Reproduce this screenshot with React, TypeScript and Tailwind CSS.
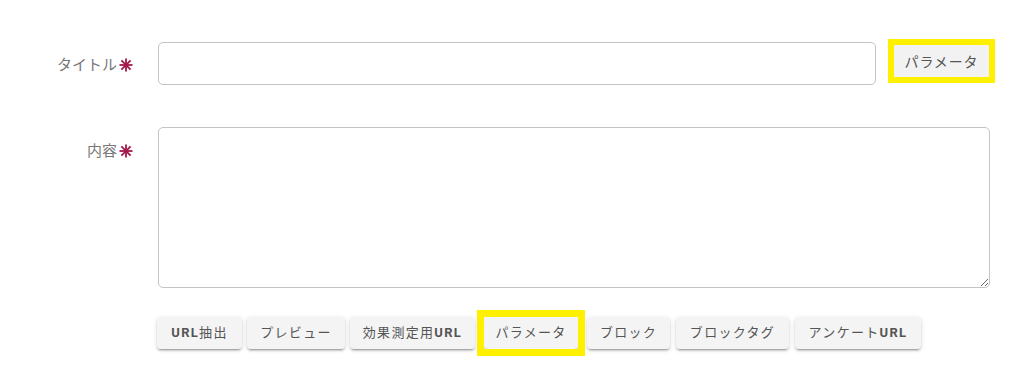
import React from "react";

const jp = { fontFamily: '"Noto Sans CJK JP", "Noto Sans", sans-serif' };
const btnFont = { fontFamily: 'Roboto, "Noto Sans CJK JP", sans-serif' };

function Star() {
  return (
    <svg width="14" height="14" viewBox="0 0 14 14" className="ml-[2px] mt-[2px]">
      <g stroke="#a3174b" strokeWidth="1.8" strokeLinecap="butt">
        <line x1="7" y1="0.5" x2="7" y2="13.5" />
        <line x1="0.5" y1="7" x2="13.5" y2="7" />
        <line x1="2.4" y1="2.4" x2="11.6" y2="11.6" />
        <line x1="11.6" y1="2.4" x2="2.4" y2="11.6" />
      </g>
    </svg>
  );
}

function Label({ text }: { text: string }) {
  return (
    <div className="w-[134px] shrink-0 flex justify-end items-center pr-[1px] text-[15px] text-[#777]" style={jp}>
      <span>{text}</span>
      <Star />
    </div>
  );
}

function MuiBtn({ children, w }: { children: React.ReactNode; w: number }) {
  return (
    <button
      className="h-[32px] flex items-center justify-center rounded-[4px] bg-[#f4f4f4] text-[#555] text-[13px] font-normal tracking-[0.1em] shadow-[0_3px_1px_-2px_rgba(0,0,0,0.2),0_2px_2px_0_rgba(0,0,0,0.14),0_1px_5px_0_rgba(0,0,0,0.12)] whitespace-nowrap"
      style={{ ...btnFont, width: w }}
    >
      {children}
    </button>
  );
}

const U = () => <span className="font-bold">URL</span>;

export default function App() {
  return (
    <div className="w-[1024px] h-[365px] bg-white overflow-hidden pt-[39px]">
      {/* Title row */}
      <div className="flex items-start">
        <div className="mt-[3px] h-[44px] flex">
          <Label text="タイトル" />
        </div>
        <div className="ml-[24px] mt-[3px] w-[718px] h-[43px] border border-[#c4c4c4] rounded-[5px]" />
        <div className="ml-[12px] border-[6px] border-[#fff000]">
          <div className="w-[95px] h-[32px] bg-[#f2f2f2] flex items-center justify-center text-[14px] text-[#555] tracking-[0.06em]" style={jp}>
            パラメータ
          </div>
        </div>
      </div>

      {/* Content row */}
      <div className="flex items-start mt-[41px]">
        <div className="h-[46px] flex">
          <Label text="内容" />
        </div>
        <textarea className="ml-[24px] w-[832px] h-[161px] border border-[#c4c4c4] rounded-[5px] outline-none resize-y" />
      </div>

      {/* Buttons row */}
      <div className="flex items-center mt-[29px] ml-[157px]">
        <div className="flex gap-[5px]">
          <MuiBtn w={85}><U />抽出</MuiBtn>
          <MuiBtn w={98}>プレビュー</MuiBtn>
          <MuiBtn w={125}>効果測定用<U /></MuiBtn>
        </div>
        <div className="relative ml-[9px] mr-[9px]">
          <MuiBtn w={94}>パラメータ</MuiBtn>
          <span className="absolute -inset-[7px] border-[7px] border-[#fff000] pointer-events-none" />
        </div>
        <div className="flex gap-[6px]">
          <MuiBtn w={83}>ブロック</MuiBtn>
          <MuiBtn w={113}>ブロックタグ</MuiBtn>
          <MuiBtn w={126}>アンケート<U /></MuiBtn>
        </div>
      </div>
    </div>
  );
}
